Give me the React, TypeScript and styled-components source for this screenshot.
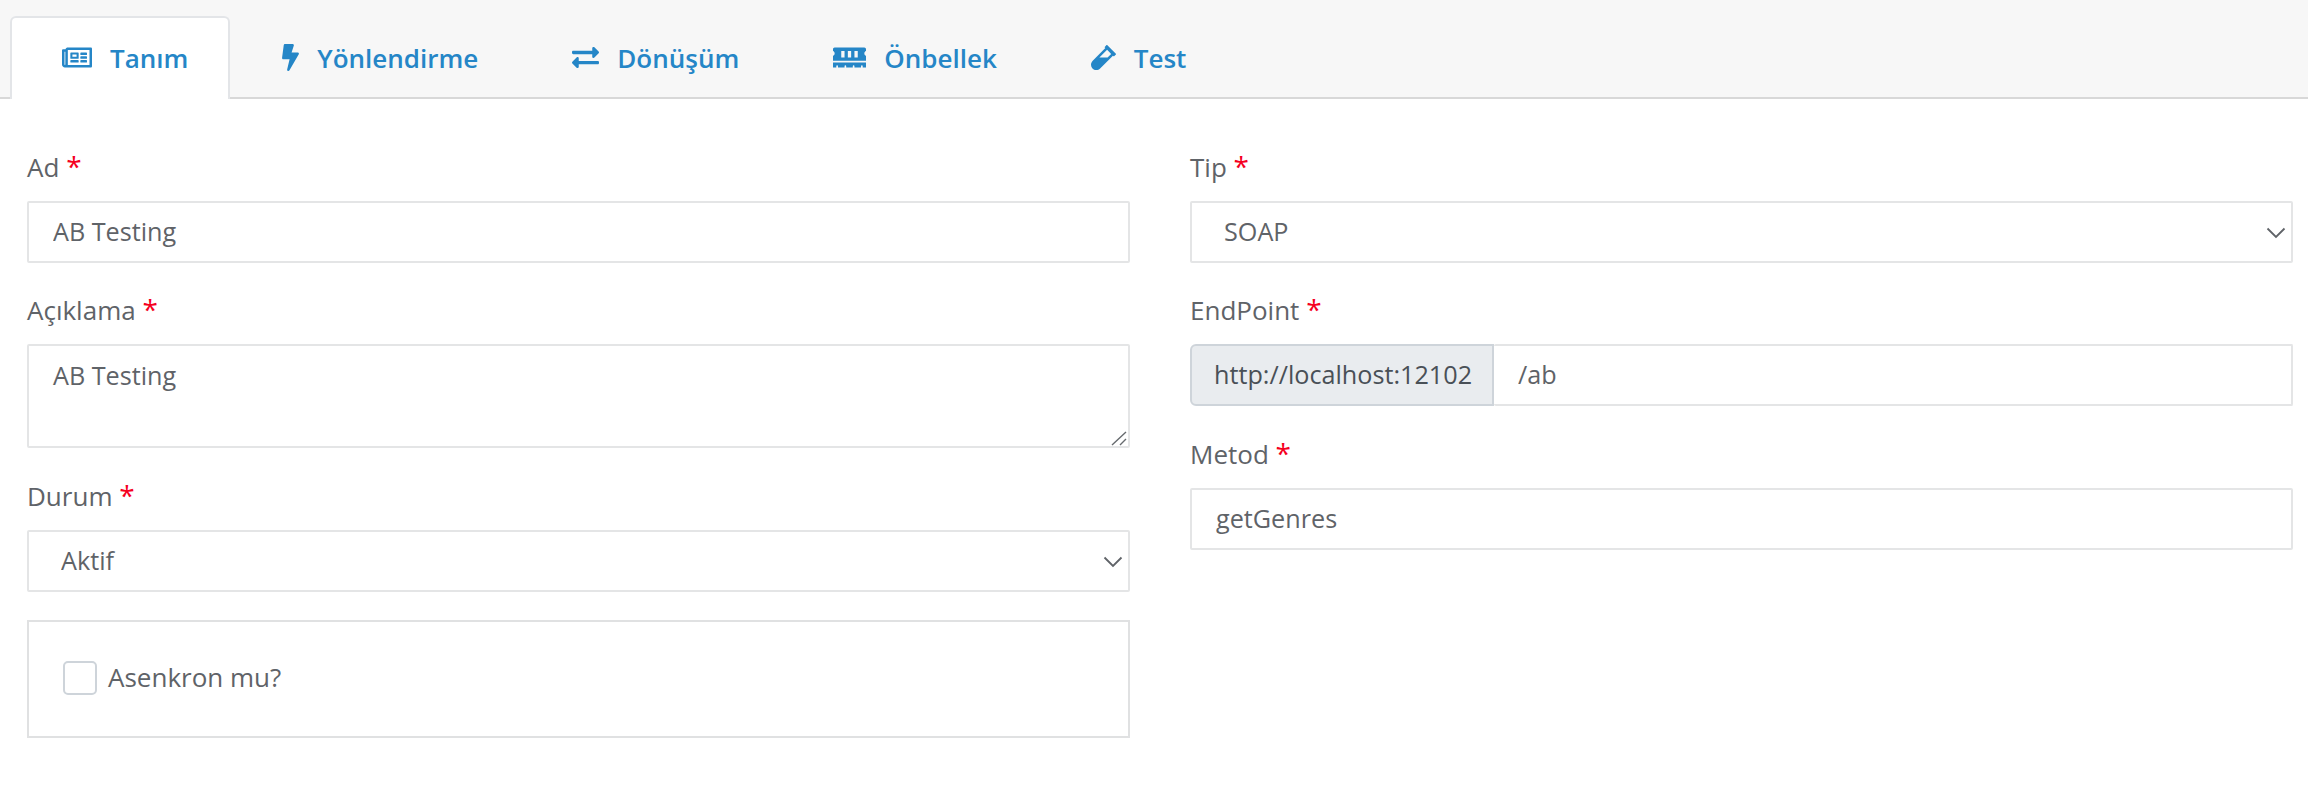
import React from 'react'
import styled, { createGlobalStyle } from 'styled-components'
import { FaRegNewspaper, FaBolt, FaExchangeAlt, FaMemory, FaVial } from 'react-icons/fa'

const GlobalStyle = createGlobalStyle`
	html, body {
		margin: 0;
		padding: 0;
		background: #fff;
		font-family: "Open Sans", "Noto Sans", sans-serif;
		color: #5f6368;
	}
	* {
		box-sizing: border-box;
	}
`

const tabs = [
	{ id: 'definition', label: 'Tanım', icon: <FaRegNewspaper />, iconWidth: 30, active: true },
	{ id: 'routing', label: 'Yönlendirme', icon: <FaBolt />, iconWidth: 17 },
	{ id: 'transform', label: 'Dönüşüm', icon: <FaExchangeAlt />, iconWidth: 27 },
	{ id: 'cache', label: 'Önbellek', icon: <FaMemory />, iconWidth: 33 },
	{ id: 'test', label: 'Test', icon: <FaVial />, iconWidth: 25 },
]

const Chevron = () => (
	<ChevronIcon viewBox="0 0 20 12" fill="none" stroke="#5f6368" strokeWidth="1.8">
		<path d="M1.5 1.5 L10 10 L18.5 1.5" />
	</ChevronIcon>
)

const Label: React.FC<{ text: string }> = ({ text }) => (
	<FieldLabel>
		{text} <Star>*</Star>
	</FieldLabel>
)

const Dropdown: React.FC<{ value: string }> = ({ value }) => (
	<SelectWrap>
		<Select defaultValue={value}>
			<option>{value}</option>
		</Select>
		<Chevron />
	</SelectWrap>
)

export default function App() {
	return (
		<Page>
			<GlobalStyle />
			<TabBar>
				{tabs.map((tab) => (
					<Tab key={tab.id} $active={tab.active} $iconWidth={tab.iconWidth}>
						{tab.icon}
						<span>{tab.label}</span>
					</Tab>
				))}
			</TabBar>

			<Form>
				<Column>
					<Field $gap={29}>
						<Label text="Ad" />
						<Input defaultValue="AB Testing" />
					</Field>
					<Field $gap={30}>
						<Label text="Açıklama" />
						<TextAreaWrap>
							<TextArea defaultValue="AB Testing" />
							<ResizeGrip viewBox="0 0 16 15" fill="none" stroke="#666a6e" strokeWidth="1.4">
								<path d="M1 14 L15 1 M9 14 L15 8" />
							</ResizeGrip>
						</TextAreaWrap>
					</Field>
					<Field $gap={28}>
						<Label text="Durum" />
						<Dropdown value="Aktif" />
					</Field>
					<CheckCard>
						<CheckLabel>
							<CheckBox type="checkbox" />
							<span>Asenkron mu?</span>
						</CheckLabel>
					</CheckCard>
				</Column>

				<Column>
					<Field $gap={29}>
						<Label text="Tip" />
						<Dropdown value="SOAP" />
					</Field>
					<Field $gap={30}>
						<Label text="EndPoint" />
						<InputGroup>
							<Addon>http://localhost:12102</Addon>
							<GroupInput defaultValue="/ab" />
						</InputGroup>
					</Field>
					<Field $gap={30}>
						<Label text="Metod" />
						<Input defaultValue="getGenres" />
					</Field>
				</Column>
			</Form>
		</Page>
	)
}

const Page = styled.div`
	width: 100%;
	min-height: 796px;
	background: #fff;
`

const TabBar = styled.div`
	display: flex;
	height: 99px;
	padding: 16px 0 0 10px;
	background: #f7f7f7;
	border-bottom: 2px solid #d8d8d8;
`

const Tab = styled.div<{ $active?: boolean; $iconWidth: number }>`
	display: flex;
	align-items: center;
	gap: 18px;
	height: 83px;
	padding: 0 40px 2px 50px;
	font-size: 26px;
	font-weight: 600;
	color: #2586c7;
	border: 2px solid ${(p) => (p.$active ? '#e3e5e8' : 'transparent')};
	border-bottom: 0;
	border-radius: 6px 6px 0 0;
	background: ${(p) => (p.$active ? '#fff' : 'transparent')};

	svg {
		width: ${(p) => p.$iconWidth}px;
		height: 27px;
		flex: none;
	}
`

const Form = styled.div`
	display: grid;
	grid-template-columns: 1103px 1103px;
	column-gap: 60px;
	padding: 50px 0 0 27px;
`

const Column = styled.div`
	display: flex;
	flex-direction: column;
`

const Field = styled.div<{ $gap: number }>`
	display: flex;
	flex-direction: column;
	margin-bottom: ${(p) => p.$gap}px;
`

const FieldLabel = styled.label`
	height: 36px;
	margin-bottom: 16px;
	font-size: 26px;
	line-height: 36px;
	color: #5f6368;
`

const Star = styled.span`
	font-size: 28px;
	line-height: 1;
	color: #f5001e;
`

const controlBase = `
	display: block;
	width: 100%;
	height: 62px;
	padding: 0 24px;
	font-family: "Open Sans", "Noto Sans", sans-serif;
	font-size: 25.2px;
	color: #5f6368;
	background: #fff;
	border: 2px solid #e4e5e6;
	border-radius: 2px;
	outline: none;
`

const Input = styled.input`
	${controlBase}
	padding-bottom: 2px;
`

const TextAreaWrap = styled.div`
	position: relative;
	height: 104px;
`

const TextArea = styled.textarea`
	${controlBase}
	height: 104px;
	padding: 11px 24px;
	line-height: 36px;
	resize: none;
`

const ResizeGrip = styled.svg`
	position: absolute;
	right: 3px;
	bottom: 2px;
	width: 16px;
	height: 15px;
	pointer-events: none;
`

const SelectWrap = styled.div`
	position: relative;
`

const Select = styled.select`
	${controlBase}
	padding: 0 32px 2px;
	appearance: none;
`

const ChevronIcon = styled.svg`
	position: absolute;
	top: 26px;
	right: 7px;
	width: 20px;
	height: 12px;
	pointer-events: none;
`

const InputGroup = styled.div`
	display: flex;
	height: 62px;
`

const Addon = styled.div`
	display: flex;
	align-items: center;
	flex: none;
	width: 304px;
	padding: 0 0 2px 22px;
	font-size: 25.2px;
	color: #495057;
	background: #e9ecef;
	border: 2px solid #ced4da;
	border-radius: 6px 0 0 6px;
	white-space: nowrap;
`

const GroupInput = styled.input`
	${controlBase}
	flex: 1;
	padding-bottom: 2px;
	border-left: 0;
`

const CheckCard = styled.div`
	display: flex;
	align-items: center;
	height: 118px;
	padding: 0 0 2px 34px;
	border: 2px solid #e0e1e2;
`

const CheckLabel = styled.label`
	display: flex;
	align-items: center;
	gap: 11px;
	font-size: 26px;
	color: #5f6368;

	span {
		margin-top: -3px;
	}
`

const CheckBox = styled.input`
	width: 34px;
	height: 34px;
	margin: 0;
	appearance: none;
	background: #fff;
	border: 2px solid #ced4da;
	border-radius: 5px;
`
